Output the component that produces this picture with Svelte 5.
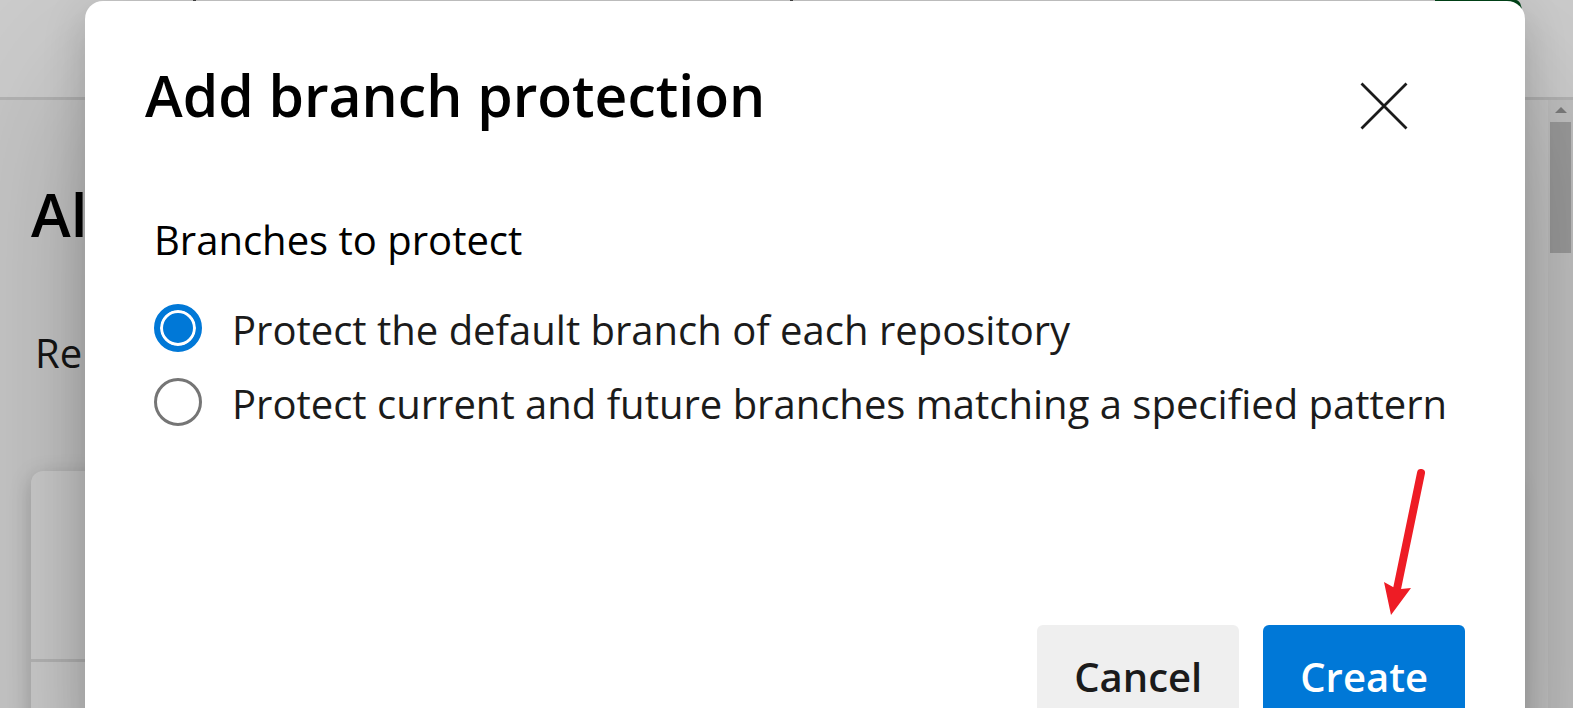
<script>
  let choice = $state('default');
  const options = [
    { value: 'default', label: 'Protect the default branch of each repository' },
    { value: 'pattern', label: 'Protect current and future branches matching a specified pattern' }
  ];
</script>

<div class="screen">
  <div class="page">
    <header class="topbar">
      <i class="tick"></i>
      <i class="tick"></i>
      <i class="action"></i>
    </header>
    <div class="body">
      <main>
        <h2>Al</h2>
        <p>Rep</p>
        <div class="card"><div class="card-head"></div></div>
      </main>
      <div class="scrollbar">
        <svg width="12" height="6" viewBox="0 0 12 6" aria-hidden="true"><path d="M6 0 12 6H0Z" fill="#9c9c9c" /></svg>
        <div class="thumb"></div>
      </div>
    </div>
  </div>

  <div class="overlay">
    <div class="dialog" role="dialog" aria-modal="true" aria-labelledby="title">
      <div class="heading">
        <h1 id="title">Add branch protection</h1>
        <button class="close" aria-label="Close">
          <svg width="48" height="48" viewBox="0 0 48 48" aria-hidden="true">
            <path d="M1.500 1.500 46.500 46.500M46.500 1.500 1.500 46.500" stroke="#1b1b1b" stroke-width="2.800" />
          </svg>
        </button>
      </div>
      <fieldset>
        <legend>Branches to protect</legend>
        {#each options as o}
          <label>
            <input type="radio" name="branches" value={o.value} bind:group={choice} />
            <span>{o.label}</span>
          </label>
        {/each}
      </fieldset>
      <div class="actions">
        <button class="btn">Cancel</button>
        <button class="btn primary">Create</button>
        <svg class="arrow" width="44" height="150" viewBox="0 0 44 150" aria-hidden="true">
          <path d="M38 6 14 122" stroke="#ee1c25" stroke-width="8" stroke-linecap="round" />
          <path d="M1 115 10 120 18 122 28 121 8 148Z" fill="#ee1c25" />
        </svg>
      </div>
    </div>
  </div>
</div>

<style>
  :global(body) {
    margin: 0;
    overflow: hidden;
  }
  .screen {
    position: relative;
    height: 100vh;
    overflow: hidden;
    font-family: 'Open Sans', 'Noto Sans', sans-serif;
    color: #1b1b1b;
  }
  .page {
    height: 100%;
    display: flex;
    flex-direction: column;
    background: #f8f8f8;
  }
  .topbar {
    box-sizing: border-box;
    height: 100px;
    flex: none;
    display: flex;
    align-items: flex-start;
    background: #fff;
    border-bottom: 3px solid #e0e0e0;
    padding: 0 51px 0 193px;
  }
  .tick {
    width: 3px;
    height: 1px;
    background: #555;
    margin-right: 594px;
  }
  .tick + .tick {
    margin-right: 0;
  }
  .action {
    width: 87px;
    height: 12px;
    margin-left: auto;
    background: #00551e;
    border-radius: 0 6px 0 0 / 0 12px 0 0;
  }
  .body {
    flex: 1;
    display: flex;
    min-height: 0;
  }
  main {
    flex: 1;
    padding: 72px 32px 0 31px;
  }
  h1,
  h2 {
    margin: 0;
    font-size: 57px;
    line-height: 84px;
    font-weight: 600;
    color: #000;
  }
  h2 {
    font-size: 60px;
  }
  main p {
    margin: 68px 0 0 4px;
    font-size: 40px;
    line-height: 58px;
  }
  .card {
    margin-top: 89px;
    height: 400px;
    border-radius: 12px;
    background: #fff;
    box-shadow: 0 5px 22px rgba(0, 0, 0, 0.2);
  }
  .card-head {
    height: 188px;
    border-bottom: 3px solid #e4e4e4;
  }
  .scrollbar {
    width: 25px;
    background: #f0f0f0;
    display: flex;
    flex-direction: column;
    align-items: center;
  }
  .scrollbar svg {
    margin: 7px 0 9px;
  }
  .thumb {
    width: 21px;
    height: 131px;
    background: #c1c1c1;
  }
  .overlay {
    position: absolute;
    inset: 0;
    padding: 1px 48px 0 85px;
    background: rgba(0, 0, 0, 0.2);
  }
  .dialog {
    box-sizing: border-box;
    height: 780px;
    padding: 52px 60px 0;
    background: #fff;
    border-radius: 18px;
    box-shadow:
      0 77px 173px rgba(0, 0, 0, 0.22),
      0 14px 43px rgba(0, 0, 0, 0.18);
  }
  .heading {
    display: flex;
    justify-content: space-between;
    align-items: flex-end;
    padding-right: 57px;
  }
  button {
    font: inherit;
    border: 0;
    padding: 0;
    cursor: pointer;
  }
  .close {
    display: flex;
    background: none;
    margin-bottom: 7px;
  }
  fieldset {
    border: 0;
    margin: 74px 0 0;
    padding: 0 0 0 9px;
    font-size: 40px;
    line-height: 58px;
  }
  legend {
    padding: 0;
    color: #000;
    margin-bottom: 22px;
  }
  label {
    display: flex;
    align-items: center;
    gap: 30px;
    height: 74px;
    white-space: nowrap;
  }
  label span {
    padding-top: 4px;
  }
  input {
    appearance: none;
    box-sizing: border-box;
    flex: none;
    width: 48px;
    height: 48px;
    margin: 0;
    border: 3px solid #757575;
    border-radius: 50%;
    background: #fff;
  }
  input:checked {
    border: 6px solid #0078d7;
    background: #0078d7;
    box-shadow: inset 0 0 0 3px #fff;
  }
  .actions {
    position: relative;
    display: flex;
    justify-content: flex-end;
    gap: 24px;
    margin-top: 186px;
  }
  .btn {
    height: 102px;
    padding: 0 37px;
    border-radius: 6px;
    font-size: 40px;
    font-weight: 600;
    color: #1b1b1b;
    background: #efefef;
  }
  .primary {
    color: #fff;
    background: #0078d7;
  }
  .arrow {
    position: absolute;
    right: 38px;
    bottom: 110px;
  }
</style>
